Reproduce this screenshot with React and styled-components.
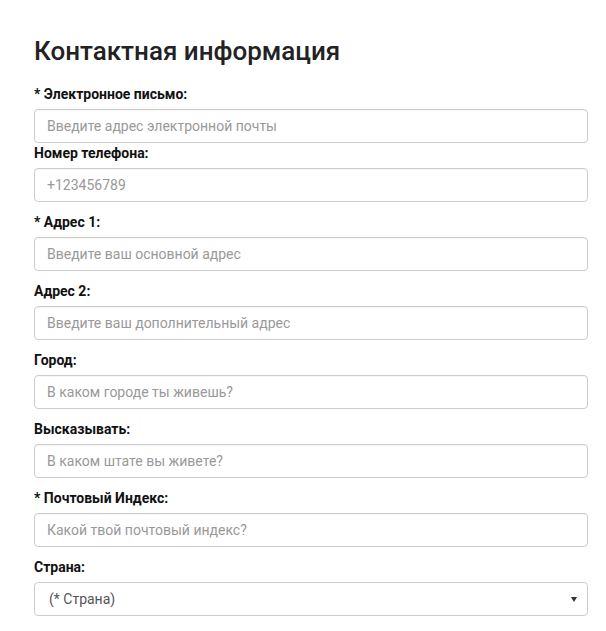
import React from "react";
import styled, { createGlobalStyle } from "styled-components";

const GlobalStyle = createGlobalStyle`
  body {
    margin: 0;
    background: #fff;
    font-family: Roboto, "Liberation Sans", Arial, sans-serif;
  }
`;

const Form = styled.form`
  width: 606px;
  box-sizing: border-box;
  padding: 35px 18px 0 34px;
`;

const Heading = styled.h2`
  margin: 0 0 18px;
  font-size: 26px;
  line-height: 32px;
  font-weight: 500;
  color: #222;
`;

const Field = styled.div`
  display: flex;
  flex-direction: column;
  margin-bottom: ${(p) => (p.$tight ? "1px" : "11px")};
`;

const Label = styled.label`
  font-size: 14px;
  line-height: 18px;
  font-weight: 700;
  color: #111;
  margin-bottom: 6px;
`;

const Input = styled.input`
  box-sizing: border-box;
  height: 34px;
  width: 100%;
  padding: 0 12px;
  border: 1px solid #ccc;
  border-radius: 4px;
  font-family: inherit;
  font-size: 14px;
  color: #555;
  box-shadow: inset 0 1px 1px rgba(0, 0, 0, 0.04);
  outline: none;

  &::placeholder {
    color: #999;
  }
`;

const SelectWrap = styled.div`
  position: relative;

  &::after {
    content: "";
    position: absolute;
    right: 11px;
    top: 15px;
    border-left: 3px solid transparent;
    border-right: 3px solid transparent;
    border-top: 5px solid #333;
    pointer-events: none;
  }
`;

const Select = styled.select`
  box-sizing: border-box;
  appearance: none;
  height: 34px;
  width: 100%;
  padding: 0 14px;
  border: 1px solid #ccc;
  border-radius: 4px;
  background: #fff;
  font-family: inherit;
  font-size: 14px;
  color: #555;
  outline: none;
`;

const fields = [
  { label: "* Электронное письмо:", placeholder: "Введите адрес электронной почты", tight: true },
  { label: "Номер телефона:", placeholder: "+123456789" },
  { label: "* Адрес 1:", placeholder: "Введите ваш основной адрес" },
  { label: "Адрес 2:", placeholder: "Введите ваш дополнительный адрес" },
  { label: "Город:", placeholder: "В каком городе ты живешь?" },
  { label: "Высказывать:", placeholder: "В каком штате вы живете?" },
  { label: "* Почтовый Индекс:", placeholder: "Какой твой почтовый индекс?" },
];

export default function App() {
  return (
    <>
      <GlobalStyle />
      <Form onSubmit={(e) => e.preventDefault()}>
        <Heading>Контактная информация</Heading>
        {fields.map((f) => (
          <Field key={f.label} $tight={f.tight}>
            <Label>{f.label}</Label>
            <Input placeholder={f.placeholder} />
          </Field>
        ))}
        <Field>
          <Label>Страна:</Label>
          <SelectWrap>
            <Select defaultValue="">
              <option value="">(* Страна)</option>
            </Select>
          </SelectWrap>
        </Field>
      </Form>
    </>
  );
}
